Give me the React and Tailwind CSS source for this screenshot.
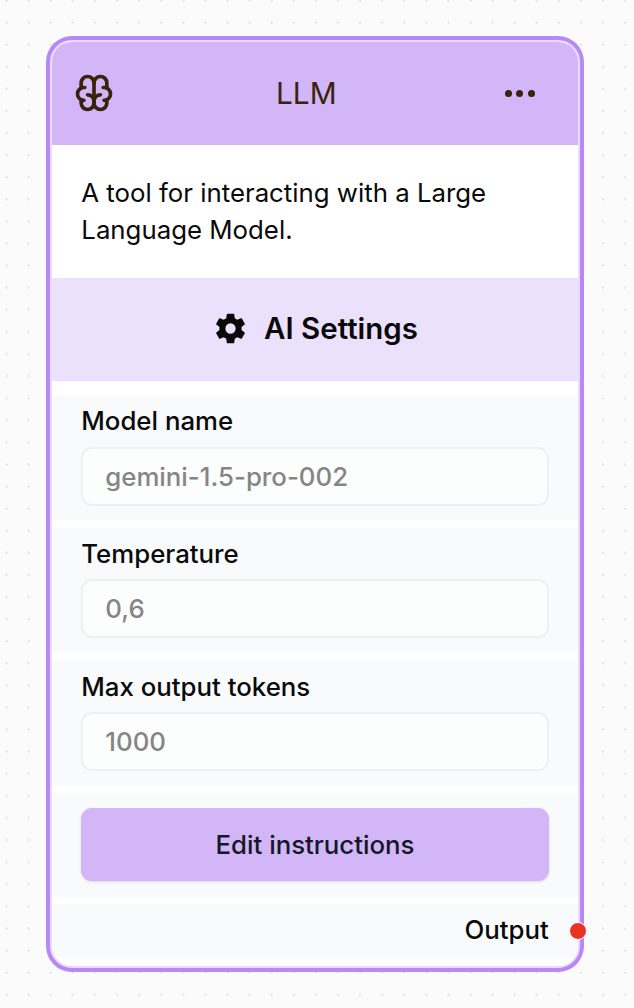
import { TbBrain } from 'react-icons/tb'
import { IoSettingsSharp } from 'react-icons/io5'

const fields = [
  { id: 'model', label: 'Model name', placeholder: 'gemini-1.5-pro-002' },
  { id: 'temperature', label: 'Temperature', placeholder: '0,6' },
  { id: 'tokens', label: 'Max output tokens', placeholder: '1000' },
]

export default function App() {
  return (
    <div className="min-h-screen bg-[radial-gradient(circle,#e3e3e3_0.9px,transparent_1.4px)] bg-[length:22.1px_22.1px] bg-[position:-4.5px_-10.6px] bg-[#fbfbfb] font-['Inter',sans-serif] text-[25.8px] leading-[37px] text-[#0a0a0a] pl-[50px] pt-[40.3px]">
      <div className="flex h-[927.5px] w-[530px] flex-col rounded-[22px] border-2 border-[#e9dcfc] bg-white ring-4 ring-[#b889f6]">
        {/* Header */}
        <header className="flex h-[102.7px] shrink-0 items-center justify-between rounded-t-[20px] bg-[#d2b6f8] pr-[43.5px] pb-[0.5px] pl-[20px] text-[#3b220c]">
          <TbBrain className="size-[44px]" />
          <h1 className="text-[29.8px]">LLM</h1>
          <button className="flex gap-[4.5px] pl-2" aria-label="More">
            <span className="size-[7px] rounded-full bg-[#3b220c]" />
            <span className="size-[7px] rounded-full bg-[#3b220c]" />
            <span className="size-[7px] rounded-full bg-[#3b220c]" />
          </button>
        </header>

        <p className="h-[132.6px] shrink-0 px-[29.3px] pt-[29px]">A tool for interacting with a Large Language Model.</p>

        <div className="mb-[14.5px] flex h-[103px] shrink-0 items-center justify-center gap-[17px] bg-[#ece1fc] pb-px pl-[2px]">
          <IoSettingsSharp className="size-[33px]" />
          <h2 className="text-[29.5px] font-semibold">AI Settings</h2>
        </div>

        {/* Model settings */}
        {fields.map((f) => (
          <div key={f.id} className="mb-[7.5px] flex h-[125.3px] shrink-0 flex-col bg-[#f9fafc] px-[29.3px] pt-[7px]">
            <label htmlFor={f.id} className="mb-[7.6px] font-medium">{f.label}</label>
            <input
              id={f.id}
              placeholder={f.placeholder}
              className="h-[59px] w-full rounded-[11px] border-2 border-[#eff0f0] bg-[#fcfefd] px-[22px] font-medium outline-none placeholder:text-[#858585]"
            />
          </div>
        ))}

        <div className="mb-[7.5px] h-[103.5px] shrink-0 bg-[#f9fafc] px-[29.3px] pt-[14.5px]">
          <button className="h-[73.5px] w-full rounded-[11px] bg-[#d2b6f8] font-medium text-[#141827] shadow-sm">Edit instructions</button>
        </div>

        {/* Output handle */}
        <div className="relative flex h-[55px] shrink-0 items-center justify-end rounded-b-[13px] bg-[#f9fafc] pr-[29.3px] pb-[5px] font-medium">
          Output
          <span className="absolute top-[18px] -right-[9px] size-[18px] rounded-full border-[1.8px] border-white bg-[#e93323]" />
        </div>
      </div>
    </div>
  )
}
